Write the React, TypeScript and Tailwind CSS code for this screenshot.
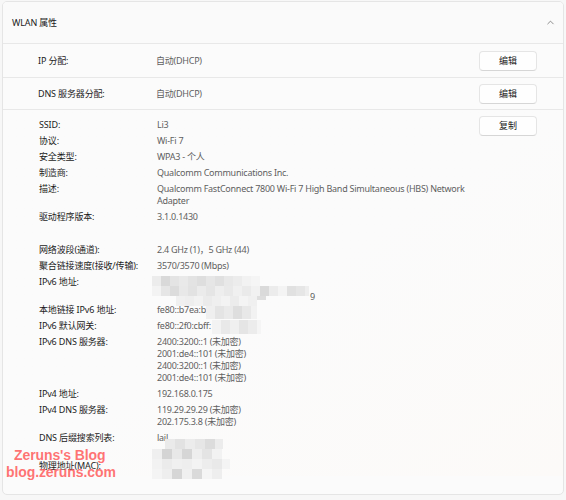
import { ChevronUp } from "lucide-react";

type Row = { label: string; lines: string[] };

const details: Row[] = [
  { label: "SSID:", lines: ["Li3"] },
  { label: "协议:", lines: ["Wi-Fi 7"] },
  { label: "安全类型:", lines: ["WPA3 - 个人"] },
  { label: "制造商:", lines: ["Qualcomm Communications Inc."] },
  {
    label: "描述:",
    lines: ["Qualcomm FastConnect 7800 Wi-Fi 7 High Band Simultaneous (HBS) Network", "Adapter"],
  },
  { label: "驱动程序版本:", lines: ["3.1.0.1430"] },
];

const network: Row[] = [
  { label: "网络波段(通道):", lines: ["2.4 GHz (1)，5 GHz (44)"] },
  { label: "聚合链接速度(接收/传输):", lines: ["3570/3570 (Mbps)"] },
  { label: "IPv6 地址:", lines: ["", ""] },
  { label: "本地链接 IPv6 地址:", lines: ["fe80::b7ea:b"] },
  { label: "IPv6 默认网关:", lines: ["fe80::2f0:cbff:"] },
  {
    label: "IPv6 DNS 服务器:",
    lines: ["2400:3200::1 (未加密)", "2001:de4::101 (未加密)", "2400:3200::1 (未加密)", "2001:de4::101 (未加密)"],
  },
  { label: "IPv4 地址:", lines: ["192.168.0.175"] },
  { label: "IPv4 DNS 服务器:", lines: ["119.29.29.29 (未加密)", "202.175.3.8 (未加密)"] },
  { label: "DNS 后缀搜索列表:", lines: ["lail", ""] },
  { label: "物理地址(MAC):", lines: [""] },
];

// mosaic cells: [x, y, w, h, colour] in page pixels
const mosaic: [number, number, number, number, string][] = [
  [152, 276, 9, 10, "#ececec"], [161, 276, 9, 10, "#d9d9d9"], [170, 276, 9, 10, "#e4e4e4"],
  [179, 276, 9, 10, "#e9e9e9"], [188, 276, 9, 10, "#e3e3e3"], [197, 276, 9, 10, "#dedede"],
  [206, 276, 9, 10, "#e6e6e6"], [215, 276, 9, 10, "#e0e0e0"], [224, 276, 9, 10, "#e8e8e8"],
  [233, 276, 9, 10, "#ececec"], [242, 276, 9, 10, "#f2f2f2"], [251, 276, 9, 10, "#f5f5f5"],
  [152, 286, 9, 10, "#f3f3f3"], [161, 286, 9, 10, "#e6e6e6"], [170, 286, 9, 10, "#dcdcdc"],
  [179, 286, 9, 10, "#e8e8e8"], [188, 286, 9, 10, "#e2e2e2"], [197, 286, 9, 10, "#ebebeb"],
  [206, 286, 9, 10, "#e5e5e5"], [215, 286, 9, 10, "#eeeeee"], [224, 286, 9, 10, "#e9e9e9"],
  [233, 286, 9, 10, "#f0f0f0"], [242, 286, 9, 10, "#eaeaea"], [251, 286, 9, 10, "#f1f1f1"],
  [260, 286, 9, 10, "#dadada"], [269, 286, 9, 10, "#ececec"], [278, 286, 9, 10, "#f4f4f4"],
  [287, 286, 9, 10, "#e1e1e1"], [296, 286, 9, 10, "#e6e6e6"], [305, 286, 4, 10, "#eeeeee"],
  [176, 296, 9, 10, "#f0f0f0"], [185, 296, 9, 10, "#eeeeee"], [194, 296, 9, 10, "#f2f2f2"],
  [203, 296, 9, 10, "#ebebeb"], [212, 296, 9, 10, "#efefef"], [221, 296, 9, 10, "#f3f3f3"],
  [230, 296, 9, 10, "#ececec"], [239, 296, 9, 10, "#f4f4f4"], [248, 296, 9, 10, "#f0f0f0"],
  [257, 296, 9, 4, "#dedede"],
  [206, 306, 9, 13, "#efefef"], [215, 306, 9, 13, "#e4e4e4"], [224, 306, 9, 13, "#eaeaea"],
  [233, 306, 9, 13, "#dedede"], [242, 306, 9, 13, "#e8e8e8"], [251, 306, 6, 13, "#f2f2f2"],
  [212, 320, 9, 14, "#f3f3f3"], [221, 320, 9, 14, "#e9e9e9"], [230, 320, 9, 14, "#f0f0f0"],
  [239, 320, 9, 14, "#e5e5e5"], [248, 320, 9, 14, "#ececec"], [257, 320, 4, 14, "#f5f5f5"],
  [165, 439, 10, 10, "#eaeaea"], [175, 439, 10, 10, "#e2e2e2"], [185, 439, 10, 10, "#ececec"],
  [195, 439, 10, 10, "#e6e6e6"], [205, 439, 10, 10, "#dcdcdc"], [215, 439, 8, 10, "#ececec"],
  [152, 449, 10, 10, "#efefef"], [162, 449, 10, 10, "#d4d4d4"], [172, 449, 10, 10, "#e8e8e8"],
  [182, 449, 10, 10, "#d6d6d6"], [192, 449, 10, 10, "#eeeeee"], [202, 449, 10, 10, "#e4e4e4"],
  [212, 449, 10, 10, "#f2f2f2"],
  [152, 459, 10, 10, "#f2f2f2"], [162, 459, 10, 10, "#ebebeb"], [172, 459, 10, 10, "#f0f0f0"],
  [182, 459, 10, 10, "#eeeeee"], [192, 459, 10, 10, "#f3f3f3"], [202, 459, 10, 10, "#ededed"],
  [212, 459, 10, 10, "#e9e9e9"], [222, 459, 8, 10, "#f4f4f4"],
  [152, 469, 10, 10, "#f4f4f4"], [162, 469, 10, 10, "#eeeeee"], [172, 469, 10, 10, "#d6d6d6"],
  [182, 469, 10, 10, "#f0f0f0"], [192, 469, 10, 10, "#dadada"], [202, 469, 10, 10, "#f5f5f5"],
  [212, 469, 10, 10, "#eeeeee"],
];

function Button({ children }: { children: string }) {
  return (
    <button className="w-[58px] h-[20px] shrink-0 rounded-[4px] bg-[#fefefe] border border-[#e5e5e5] border-b-[#d6d6d6] text-[9px] text-[#1b1b1b] flex items-center justify-center">
      {children}
    </button>
  );
}

function InfoRow({ label, lines }: Row) {
  return (
    <div className="flex pb-[4px]">
      <div className="w-[118px] shrink-0 text-[#1b1b1b] leading-[12px] tracking-[-0.15px]">{label}</div>
      <div className="text-[#5f5f5f] leading-[12px] tracking-[-0.25px]">
        {lines.map((l, i) => (
          <div key={i} className="h-[12px] whitespace-nowrap">{l}</div>
        ))}
      </div>
    </div>
  );
}

export default function App() {
  return (
    <div
      className="relative w-[566px] h-[500px] overflow-hidden bg-[#f7f7f7] pt-[1px] px-[2px] text-[9px]"
      style={{ fontFamily: '"Noto Sans", "Noto Sans CJK SC", sans-serif' }}
    >
      <div className="h-[494px] rounded-[5px] border border-[#e5e5e5] bg-[#fbfbfb] overflow-hidden">
        {/* Header */}
        <div className="h-[42px] flex items-center justify-between pl-[9px] pr-[7px] border-b border-[#e8e8e8] bg-[#fafafa]">
          <span className="text-[#1b1b1b] tracking-[-0.15px]">WLAN 属性</span>
          <ChevronUp size={11} strokeWidth={1.3} className="text-[#444]" />
        </div>

        {/* Editable rows */}
        <div className="h-[34px] flex items-center pl-[35px] pr-[26px] border-b border-[#e8e8e8]">
          <div className="w-[118px] text-[#1b1b1b] tracking-[-0.15px]">IP 分配:</div>
          <div className="flex-1 text-[#5f5f5f] tracking-[-0.25px]">自动(DHCP)</div>
          <Button>编辑</Button>
        </div>
        <div className="h-[32px] flex items-center pl-[35px] pr-[26px] border-b border-[#e8e8e8]">
          <div className="w-[118px] text-[#1b1b1b] tracking-[-0.15px]">DNS 服务器分配:</div>
          <div className="flex-1 text-[#5f5f5f] tracking-[-0.25px]">自动(DHCP)</div>
          <Button>编辑</Button>
        </div>

        {/* Details */}
        <div className="flex pl-[36px] pr-[26px] pt-[6px] bg-gradient-to-br from-[#fbfbfb] via-[#fbfbfb] to-[#fcfaf8]">
          <div className="flex-1 pt-[3px]">
            {details.map((r) => (
              <InfoRow key={r.label} {...r} />
            ))}
            <div className="h-[17px]" />
            {network.map((r) => (
              <InfoRow key={r.label} {...r} />
            ))}
          </div>
          <Button>复制</Button>
        </div>
      </div>

      {/* pixelated mosaic over hidden values */}
      {mosaic.map(([x, y, w, h, c], i) => (
        <div
          key={i}
          className="absolute"
          style={{ left: x, top: y, width: w, height: h, backgroundColor: c }}
        />
      ))}
      <span className="absolute left-[310px] top-[290px] text-[9px] text-[#5f5f5f]">9</span>

      {/* watermark */}
      <div
        className="absolute left-[6px] top-[447px] text-[14px] font-bold leading-[17px] tracking-[-0.1px] text-[#ff5a5a]/85"
        style={{ fontFamily: '"Liberation Sans", Arial, sans-serif' }}
      >
        <div className="pl-[8px]">Zeruns's Blog</div>
        <div>blog.zeruns.com</div>
      </div>
    </div>
  );
}
